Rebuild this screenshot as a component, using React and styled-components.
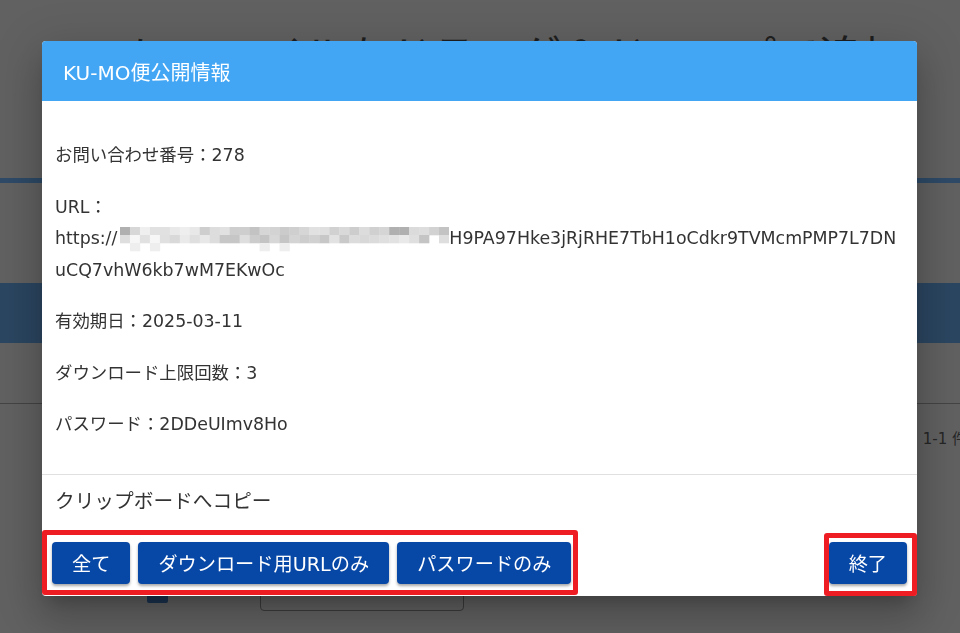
import React from "react";
import styled, { createGlobalStyle } from "styled-components";

const GlobalStyle = createGlobalStyle`
  html, body {
    margin: 0;
    height: 100%;
    overflow: hidden;
    background: #616161;
  }
  body {
    font-family: "DejaVu Sans", "Noto Sans CJK JP", sans-serif;
  }
  #root { height: 100%; }
`;

/* ---------- dimmed page behind the modal ---------- */
const Page = styled.div`
  height: 100%;
  display: flex;
  flex-direction: column;
  overflow: hidden;
`;

const Heading = styled.div`
  margin-top: 33px;
  padding-left: 45px;
  height: 48px;
  line-height: 48px;
  font-size: 43px;
  color: #1f1f1f;
  white-space: nowrap;
  overflow: hidden;
`;

const TopRule = styled.div`
  margin-top: 97px;
  height: 5px;
  background: #2e4a67;
`;

const Band = styled.div`
  margin-top: 100px;
  height: 60px;
  background: #2b4661;
`;

const Rule = styled.div`
  margin-top: 60px;
  height: 1px;
  background: #444;
`;

const CountRow = styled.div`
  height: 66px;
  display: flex;
  align-items: center;
  justify-content: flex-end;
  font-size: 15px;
  color: #262626;
  white-space: nowrap;
`;

const CountText = styled.span`
  margin-right: -7px;
`;

const BottomRow = styled.div`
  margin-top: 112px;
  height: 30px;
  display: flex;
  align-items: flex-start;
  padding-left: 147px;
  gap: 92px;
`;

const CheckBox = styled.div`
  width: 21px;
  height: 21px;
  border-radius: 2px;
  background: #1b3351;
`;

const InputBox = styled.div`
  width: 204px;
  height: 29px;
  border: 1px solid #3b3b3b;
  border-radius: 4px;
  box-sizing: border-box;
`;

/* ---------- modal ---------- */
const Backdrop = styled.div`
  position: fixed;
  inset: 0;
  display: flex;
  justify-content: center;
  align-items: flex-start;
  padding: 41px 1px 0 0;
`;

const Dialog = styled.div`
  width: 875px;
  background: #fff;
  border-radius: 4px;
  box-shadow: 0 11px 15px -7px rgba(0, 0, 0, 0.2),
    0 24px 38px 3px rgba(0, 0, 0, 0.14), 0 9px 46px 8px rgba(0, 0, 0, 0.12);
  display: flex;
  flex-direction: column;
`;

const Header = styled.div`
  height: 60px;
  background: #42a6f5;
  border-radius: 4px 4px 0 0;
  display: flex;
  align-items: center;
  padding-left: 21px;
  color: #fff;
  font-size: 20px;
`;

const Body = styled.div`
  padding: 39px 13px 33px;
  display: flex;
  flex-direction: column;
  gap: 20px;
  color: #333;
  font-size: 17.4px;
  line-height: 31.5px;
`;

const Item = styled.div`
  margin: 0;
`;

const UrlValue = styled.div`
  word-break: break-all;
`;

const MosaicSvg = styled.svg`
  display: inline-block;
  vertical-align: -8px;
  margin-left: 3px;
`;

const Footer = styled.div`
  border-top: 1px solid #e0e0e0;
  padding: 13px 10px 12px;
  display: flex;
  flex-direction: column;
  gap: 27px;
`;

const CopyLabel = styled.div`
  margin-left: 3px;
  font-size: 19.7px;
  line-height: 27px;
  color: #333;
`;

const ButtonRow = styled.div`
  display: flex;
  justify-content: space-between;
  align-items: center;
`;

const Group = styled.div`
  position: relative;
  display: flex;
  gap: 8px;

  &::after {
    content: "";
    position: absolute;
    top: ${(p) => p.$box.top}px;
    left: ${(p) => p.$box.left}px;
    right: ${(p) => p.$box.right}px;
    bottom: ${(p) => p.$box.bottom}px;
    border: 5px solid #ee1d24;
    border-radius: 3px;
    pointer-events: none;
  }
`;

const Button = styled.button`
  height: 42px;
  padding: 0 20px;
  border: none;
  border-radius: 4px;
  background: #0747a6;
  color: #fff;
  font-family: "DejaVu Sans", "Noto Sans CJK JP", sans-serif;
  font-size: 19.2px;
  box-shadow: 0 2px 3px rgba(0, 0, 0, 0.35);
  cursor: pointer;
  white-space: nowrap;
`;

function Mosaic() {
  let s = 4242;
  const rnd = () => {
    s = (s * 16807) % 2147483647;
    return s / 2147483647;
  };
  const cols = 33;
  const cw = 329 / cols;
  const rects = [];
  for (let r = 0; r < 3; r++) {
    for (let c = 0; c < cols; c++) {
      let v;
      const shade = c > 9 ? 0 : 14;
      if (r === 0) {
        v = rnd() < 0.18 ? 176 : 192 + shade + Math.floor(rnd() * 34);
      } else if (r === 1) {
        v = rnd() < 0.06 ? 255 : 196 + shade + Math.floor(rnd() * 38);
      } else {
        v = rnd() < 0.2 ? 238 : 255;
      }
      if (v >= 255) continue;
      v = Math.min(v, 246);
      rects.push(
        <rect
          key={`${r}-${c}`}
          x={c * cw}
          y={r * 8}
          width={cw + 0.3}
          height={8.3}
          fill={`rgb(${v},${v},${v})`}
        />
      );
    }
  }
  return (
    <MosaicSvg width="329" height="25" viewBox="0 0 329 25">
      {rects}
    </MosaicSvg>
  );
}

export default function App() {
  return (
    <>
      <GlobalStyle />
      <Page>
        <Heading>ここにファイルをドラッグ＆ドロップで追加</Heading>
        <TopRule />
        <Band />
        <Rule />
        <CountRow>
          <CountText>1-1 件</CountText>
        </CountRow>
        <BottomRow>
          <CheckBox />
          <InputBox />
        </BottomRow>
      </Page>

      <Backdrop>
        <Dialog>
          <Header>KU-MO便公開情報</Header>
          <Body>
            <Item>お問い合わせ番号：278</Item>
            <Item>
              URL：
              <UrlValue>
                https://
                <Mosaic />
                H9PA97Hke3jRjRHE7TbH1oCdkr9TVMcmPMP7L7DNuCQ7vhW6kb7wM7EKwOc
              </UrlValue>
            </Item>
            <Item>有効期日：2025-03-11</Item>
            <Item>ダウンロード上限回数：3</Item>
            <Item>パスワード：2DDeUImv8Ho</Item>
          </Body>
          <Footer>
            <CopyLabel>クリップボードへコピー</CopyLabel>
            <ButtonRow>
              <Group $box={{ top: -12, left: -10, right: -7, bottom: -11 }}>
                <Button>全て</Button>
                <Button>ダウンロード用URLのみ</Button>
                <Button>パスワードのみ</Button>
              </Group>
              <Group $box={{ top: -9, left: -5, right: -10, bottom: -12 }}>
                <Button>終了</Button>
              </Group>
            </ButtonRow>
          </Footer>
        </Dialog>
      </Backdrop>
    </>
  );
}
